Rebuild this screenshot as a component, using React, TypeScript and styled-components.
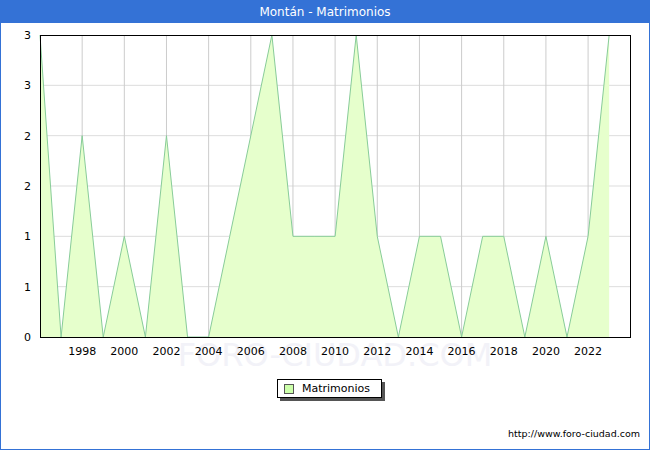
import React from "react";
import styled, { createGlobalStyle } from "styled-components";

const Global = createGlobalStyle`
  html, body { margin: 0; padding: 0; background: #fff; }
  body { font-family: "DejaVu Sans", Verdana, sans-serif; }
`;

const Frame = styled.div`
  width: 650px; height: 450px; box-sizing: border-box;
  border: 1px solid #3472d6; border-top: none;
  display: flex; flex-direction: column; background: #fff;
`;
const Title = styled.div`
  height: 23px; background: #3472d6; color: #fff;
  font-size: 12px; display: flex; align-items: center; justify-content: center;
  margin: 0 -1px;
`;
const Legend = styled.div`
  align-self: flex-start; margin: 11px 0 0 276px;
  display: flex; align-items: center; gap: 8px;
  border: 1px solid #000; box-shadow: 3px 3px 0 #555;
  padding: 2px 11px 2px 6px; font-size: 11px; color: #000; background: #fff;
`;
const Swatch = styled.span`
  width: 8px; height: 8px; border: 1px solid #555; background: #ccffaa;
`;
const Footer = styled.div`
  margin-top: auto; padding: 0 9px 10px 0; text-align: right;
  font-size: 9.5px; color: #000;
`;

const data = [3,0,2,0,1,0,2,0,0,1,2,3,1,1,1,3,1,0,1,1,0,1,1,0,1,0,1,3];
const X = (i: number) => 40 + i * 21.08;
const Y = (v: number) => 337 - v * (302 / 3);

export default function App() {
  const line = data.map((v, i) => `${X(i)},${Y(v)}`).join(" ");
  const area = `${X(0)},337 ${line} ${X(data.length - 1)},337`;
  const grids = [0.5, 1, 1.5, 2, 2.5];
  const ylab = ["0", "1", "1", "2", "2", "3", "3"];
  const years = Array.from({ length: 13 }, (_, k) => 1998 + 2 * k);
  return (
    <>
      <Global />
      <Frame>
        <Title>Montán - Matrimonios</Title>
        <svg width="648" height="345" viewBox="1 23 648 345" style={{ display: "block" }}>
          <text x="335" y="366" textAnchor="middle" fontSize="32" fill="#f2f2f8" fontFamily="DejaVu Sans">FORO-CIUDAD.COM</text>
          {grids.map(g => <line key={g} x1="40" x2="630" y1={Y(g)} y2={Y(g)} stroke="#dddddd" />)}
          {years.map(y => { const x = X(y - 1996); return <line key={y} x1={x} x2={x} y1="35" y2="337" stroke="#cccccc" />; })}
          <polygon points={area} fill="#e6ffcc" />
          <polyline points={line} fill="none" stroke="#88cc99" strokeWidth="1" />
          <rect x="40.5" y="35.5" width="590" height="302" fill="none" stroke="#000" />
          {ylab.map((t, k) => <text key={k} x="31" y={Y(k * 0.5) + 4} textAnchor="end" fontSize="11" fontFamily="DejaVu Sans">{t}</text>)}
          {years.map(y => <text key={y} x={X(y - 1996)} y="355" textAnchor="middle" fontSize="11" fontFamily="DejaVu Sans">{y}</text>)}
        </svg>
        <Legend><Swatch />Matrimonios</Legend>
        <Footer>http://www.foro-ciudad.com</Footer>
      </Frame>
    </>
  );
}
